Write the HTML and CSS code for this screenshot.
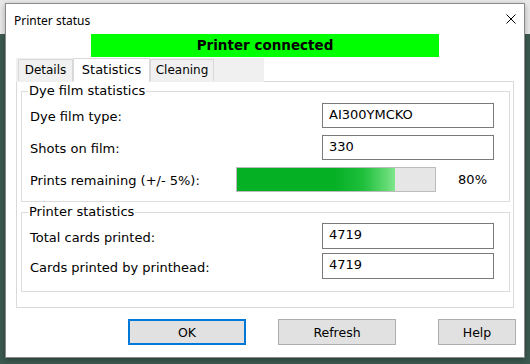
FILE: index.html
```html
<!DOCTYPE html>
<html lang="en">
<head>
    <meta charset="UTF-8">
    <title>Printer status</title>
    <link rel="stylesheet" href="styles.css">
</head>
<body>

    <div class="dialog">
        <div class="titlebar">
            <span class="title">Printer status</span>
            <svg class="close" width="10" height="10" viewBox="0 0 10 10">
                <path d="M0.5 0.5 L9.5 9.5 M9.5 0.5 L0.5 9.5" stroke="#000" stroke-width="1" fill="none"/>
            </svg>
        </div>

        <div class="status">Printer connected</div>

        <div class="tabs">
            <div class="tab tab-details">Details</div>
            <div class="tab tab-stats selected">Statistics</div>
            <div class="tab tab-cleaning">Cleaning</div>
        </div>

        <div class="panel">
            <fieldset class="group group-dye">
                <legend>Dye film statistics</legend>
                <div class="row">
                    <span class="label">Dye film type:</span>
                    <div class="field">AI300YMCKO</div>
                </div>
                <div class="row">
                    <span class="label">Shots on film:</span>
                    <div class="field">330</div>
                </div>
                <div class="row">
                    <span class="label">Prints remaining (+/- 5%):</span>
                    <div class="progress"><div class="progress-fill" style="width: 80%"></div></div>
                    <span class="percent">80%</span>
                </div>
            </fieldset>

            <fieldset class="group group-printer">
                <legend>Printer statistics</legend>
                <div class="row">
                    <span class="label">Total cards printed:</span>
                    <div class="field">4719</div>
                </div>
                <div class="row">
                    <span class="label">Cards printed by printhead:</span>
                    <div class="field">4719</div>
                </div>
            </fieldset>
        </div>

        <div class="buttons">
            <button class="btn btn-default">OK</button>
            <button class="btn btn-refresh">Refresh</button>
            <button class="btn btn-help">Help</button>
        </div>
    </div>

</body>
</html>
```

FILE: styles.css
```css
body {
    margin: 0;
    height: 364px;
    overflow: hidden;
    background: linear-gradient(#e9e9e9 0, #e9e9e9 34px, #3c5a50 34px);
    font-family: "DejaVu Sans", Verdana, sans-serif;
    color: #000;
}

.dialog {
    box-sizing: border-box;
    width: 520px;
    height: 355px;
    margin: 3px 0 0 5px;
    background-color: #fff;
    border: 1px solid #8a8a8a;
    box-shadow: 0 2px 6px rgba(0, 0, 0, 0.3);
}

.titlebar {
    height: 30px;
    display: flex;
    align-items: center;
    padding-left: 8px;
    padding-top: 1px;
    box-sizing: border-box;
}

.title {
    font-family: "Noto Sans", "Segoe UI", sans-serif;
    font-size: 12px;
    padding-top: 2px;
}

.close {
    margin-left: auto;
    margin-right: 8px;
    margin-top: -2px;
}

.status {
    width: 348px;
    height: 23px;
    margin: 0 auto;
    background-color: #00ff00;
    font-weight: bold;
    font-size: 13.5px;
    line-height: 23px;
    text-align: center;
}

.tabs {
    display: flex;
    align-items: flex-end;
    width: 246px;
    height: 24px;
    margin: 1px 0 -1px 10px;
    padding-left: 2px;
    background-color: #f0f0f0;
    position: relative;
}

.tab {
    box-sizing: border-box;
    height: 22px;
    border: 1px solid #d9d9d9;
    border-bottom: none;
    background-color: #f0f0f0;
    font-size: 12px;
    line-height: 21px;
    text-align: center;
    margin-bottom: 1px;
}

.tab-details {
    width: 55px;
}

.tab-stats {
    width: 77px;
}

.tab-cleaning {
    width: 64px;
}

.tab.selected {
    height: 24px;
    margin-bottom: 0;
    background-color: #fff;
    font-size: 13px;
    line-height: 21px;
    position: relative;
    z-index: 1;
}

.panel {
    box-sizing: border-box;
    height: 227px;
    margin: 0 10px;
    padding: 1px 3px 0 4px;
    border: 1px solid #d9d9d9;
}

.group {
    margin: 0;
    border: 1px solid #dcdcdc;
    padding: 0 15px 0 8px;
}

.group legend {
    font-size: 13px;
    line-height: 16px;
    padding: 0 1px;
    margin-left: -2px;
}

.group-dye {
    padding-top: 4px;
    padding-bottom: 9px;
}

.group-dye .row + .row {
    margin-top: 7px;
}

.group-printer {
    margin-top: 2px;
    padding-top: 3px;
    padding-bottom: 12px;
}

.group-printer .row {
    height: 26px;
}

.group-printer .row + .row {
    margin-top: 4px;
}

.group-printer .field {
    height: 26px;
}

.row {
    display: flex;
    align-items: center;
    height: 25px;
}

.label {
    flex: 1;
    font-size: 13px;
    padding-top: 2px;
}

.field {
    box-sizing: border-box;
    width: 172px;
    height: 25px;
    border: 1px solid #7a7a7a;
    padding-left: 6px;
    font-size: 13px;
    line-height: 22px;
}

.progress {
    box-sizing: border-box;
    width: 200px;
    height: 25px;
    border: 1px solid #bcbcbc;
    background-color: #e6e6e6;
}

.progress-fill {
    height: 100%;
    background: linear-gradient(to right, #06b025 0, #06b025 62%, #1fbf3c 80%, #5fd970 94%, #7fe68c 100%);
}

.percent {
    width: 58px;
    box-sizing: border-box;
    padding-right: 7px;
    text-align: right;
    font-size: 13px;
}

.buttons {
    display: flex;
    justify-content: flex-end;
    margin-top: 11px;
    padding-right: 8px;
}

.btn {
    box-sizing: border-box;
    height: 26px;
    border: 1px solid #adadad;
    background-color: #e1e1e1;
    font-family: "DejaVu Sans", Verdana, sans-serif;
    font-size: 12.5px;
    color: #000;
    padding: 0;
}

.btn-default {
    width: 118px;
    border: 2px solid #0078d7;
}

.btn-refresh {
    width: 118px;
    margin-left: 32px;
}

.btn-help {
    width: 78px;
    margin-left: 42px;
}
```
